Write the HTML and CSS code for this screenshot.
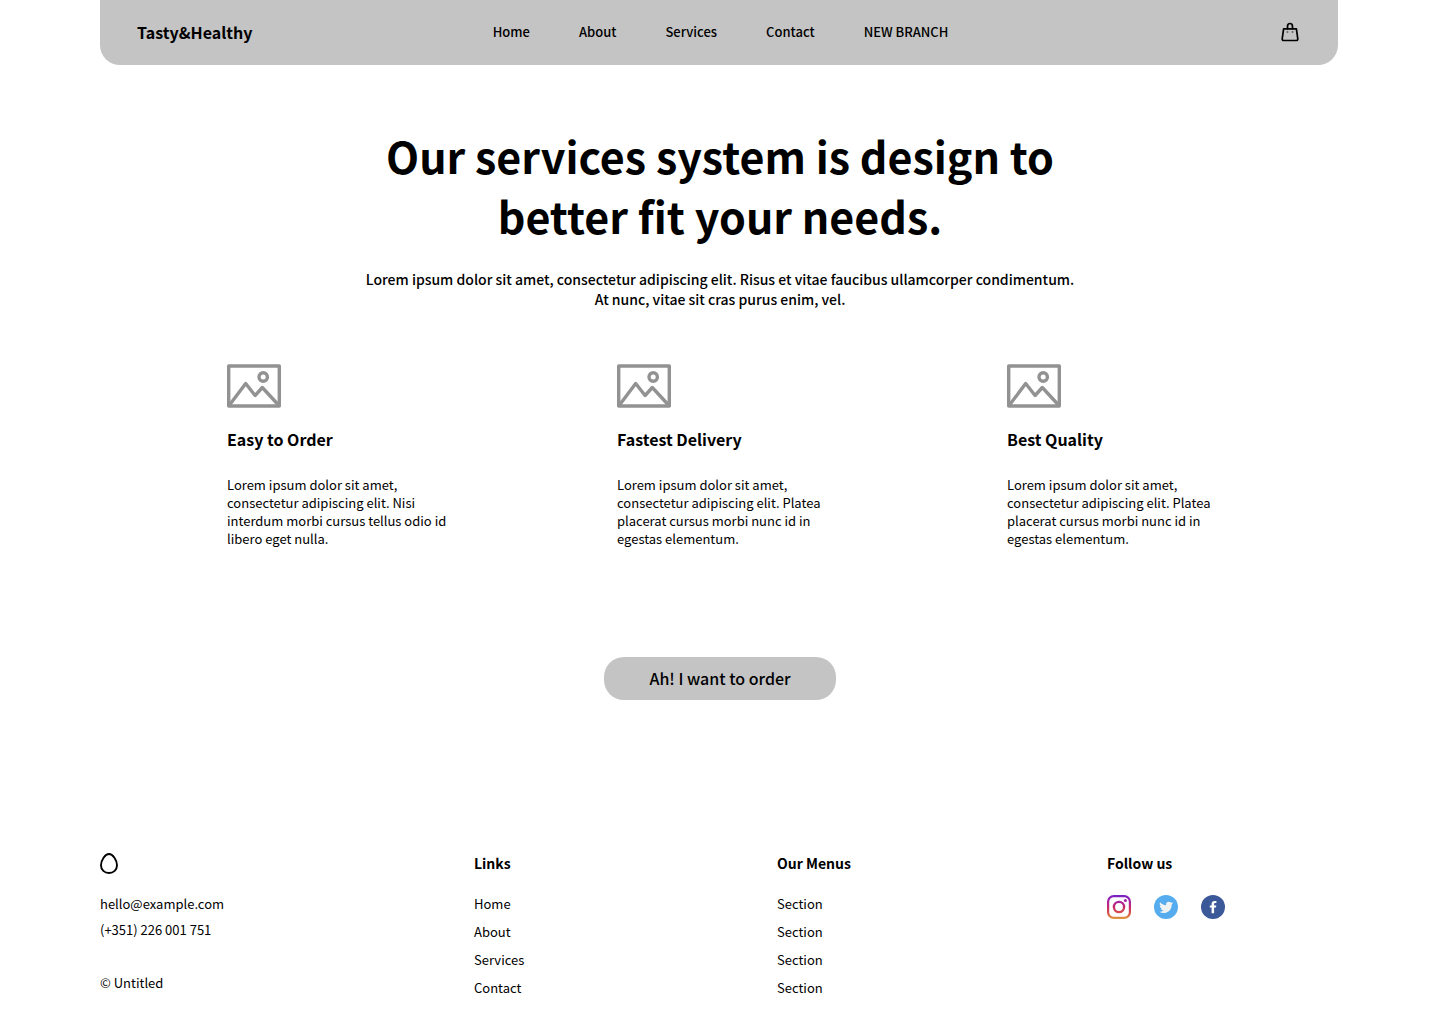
FILE: index.html
```html
<!DOCTYPE html>
<html lang="en">
<head>
<meta charset="utf-8">
<meta name="viewport" content="width=device-width, initial-scale=1">
<title>Tasty&amp;Healthy – Services</title>
<link rel="stylesheet" href="styles.css">
</head>
<body>
<svg class="sprite" aria-hidden="true">
  <symbol id="picture" viewBox="0 0 54 44">
    <g fill="none" stroke="#929292" stroke-width="3.4" stroke-linejoin="round" stroke-linecap="round">
      <rect x="1.7" y="2" width="50.6" height="40"/>
      <path d="M2.5 41 18.7 19.5l9.4 12 7.2-8L51.5 41"/>
      <circle cx="36.2" cy="13" r="4.2"/>
    </g>
  </symbol>
</svg>

<header class="header">
  <a class="brand" href="#">Tasty&amp;Healthy</a>
  <nav class="nav" aria-label="Main">
    <a href="#">Home</a>
    <a href="#">About</a>
    <a href="#">Services</a>
    <a href="#">Contact</a>
    <a href="#">NEW BRANCH</a>
  </nav>
  <button class="cart" type="button" aria-label="Shopping bag">
    <svg width="18" height="20" viewBox="0 0 18 20" fill="none" stroke="#000" stroke-width="1.7" stroke-linejoin="round" stroke-linecap="round">
      <path d="M2.6 6.9h12.8l1.4 9.9q.1 1.7-1.6 1.7H2.8q-1.7 0-1.6-1.7z"/>
      <path d="M6.5 6.700V4.400a2.500 2.900 0 0 1 5 0v2.300"/>
      <path d="M6.400 10h.1M11.500 10h.1" stroke="#666" stroke-width="1.900"/>
    </svg>
  </button>
</header>

<main>
  <section class="intro">
    <h1>Our services system is design to better fit your needs.</h1>
    <p>Lorem ipsum dolor sit amet, consectetur adipiscing elit. Risus et vitae faucibus ullamcorper condimentum. At nunc, vitae sit cras purus enim, vel.</p>
  </section>

  <section class="features">
    <article class="feature">
      <svg width="54" height="44" aria-hidden="true"><use href="#picture"/></svg>
      <h2>Easy to Order</h2>
      <p>Lorem ipsum dolor sit amet, consectetur adipiscing elit. Nisi interdum morbi cursus tellus odio id libero eget nulla.</p>
    </article>
    <article class="feature">
      <svg width="54" height="44" aria-hidden="true"><use href="#picture"/></svg>
      <h2>Fastest Delivery</h2>
      <p>Lorem ipsum dolor sit amet, consectetur adipiscing elit. Platea placerat cursus morbi nunc id in egestas elementum.</p>
    </article>
    <article class="feature">
      <svg width="54" height="44" aria-hidden="true"><use href="#picture"/></svg>
      <h2>Best Quality</h2>
      <p>Lorem ipsum dolor sit amet, consectetur adipiscing elit. Platea placerat cursus morbi nunc id in egestas elementum.</p>
    </article>
  </section>

  <div class="action">
    <button class="order" type="button">Ah! I want to order</button>
  </div>
</main>

<footer class="footer">
  <div class="contact">
    <svg width="18" height="24" viewBox="0 -2 18 24" fill="none" stroke="#000" stroke-width="1.9" aria-hidden="true">
      <path d="M9 1C12.800 1 17 7.400 17 12.200 17 16.900 13.500 20 9 20S1 16.900 1 12.200C1 7.400 5.200 1 9 1z"/>
    </svg>
    <a href="mailto:hello@example.com">hello@example.com</a>
    <a href="tel:+351226001751">(+351) 226 001 751</a>
    <small>© Untitled</small>
  </div>
  <nav class="links" aria-labelledby="links-title">
    <h3 id="links-title">Links</h3>
    <a href="#">Home</a>
    <a href="#">About</a>
    <a href="#">Services</a>
    <a href="#">Contact</a>
  </nav>
  <nav class="links" aria-labelledby="menus-title">
    <h3 id="menus-title">Our Menus</h3>
    <a href="#">Section</a>
    <a href="#">Section</a>
    <a href="#">Section</a>
    <a href="#">Section</a>
  </nav>
  <div class="follow">
    <h3>Follow us</h3>
    <div class="social">
      <a href="#" aria-label="Instagram">
        <svg width="24" height="24" viewBox="0 0 24 24" fill="none">
          <defs>
            <linearGradient id="insta" x1="12" y1="0" x2="12" y2="24" gradientUnits="userSpaceOnUse">
              <stop stop-color="#7024c4"/><stop offset=".2" stop-color="#a01fb0"/><stop offset=".5" stop-color="#c62a6c"/><stop offset=".75" stop-color="#d6504c"/><stop offset="1" stop-color="#e09b3d"/>
            </linearGradient>
          </defs>
          <rect x="1.1" y="1.1" width="21.8" height="21.8" rx="5.700" stroke="url(#insta)" stroke-width="2.2"/>
          <circle cx="12" cy="12" r="5.100" stroke="url(#insta)" stroke-width="2.400"/>
          <circle cx="18.400" cy="5.600" r="1.500" fill="url(#insta)"/>
        </svg>
      </a>
      <a href="#" aria-label="Twitter">
        <svg width="24" height="24" viewBox="0 0 24 24">
          <circle cx="12" cy="12" r="12" fill="#55acee"/>
          <path transform="translate(5.200 5.400) scale(.58)" fill="#f1f2f2" d="M23.950 4.570a10 10 0 0 1-2.820.770 4.960 4.960 0 0 0 2.160-2.720c-.950.550-2 .950-3.130 1.180a4.920 4.920 0 0 0-8.380 4.480C7.690 8.100 4.070 6.130 1.640 3.160a4.920 4.920 0 0 0 1.520 6.570 4.900 4.900 0 0 1-2.230-.610v.060a4.920 4.920 0 0 0 3.950 4.830 5 5 0 0 1-2.210.080 4.940 4.940 0 0 0 4.600 3.420A9.870 9.870 0 0 1 0 19.540a13.990 13.990 0 0 0 7.550 2.210c9.050 0 14-7.500 14-13.980 0-.210 0-.420-.020-.630a9.940 9.940 0 0 0 2.420-2.570z"/>
        </svg>
      </a>
      <a href="#" aria-label="Facebook">
        <svg width="24" height="24" viewBox="0 0 24 24">
          <circle cx="12" cy="12" r="12" fill="#3b5998"/>
          <path fill="#fff" d="M13.100 18.200v-5.600h1.900l.3-2.200h-2.200V9.200c0-.7.3-1.100 1.100-1.100h1.200V6.100c-.3 0-.9-.1-1.600-.1-2.100 0-3.200 1-3.200 2.900v1.500H8.800v2.200h1.800v5.600z"/>
        </svg>
      </a>
    </div>
  </div>
</footer>
</body>
</html>
```
FILE: styles.css
```css
* {
  box-sizing: border-box;
}

body {
  margin: 0;
  background: #fff;
  color: #000;
  font: 400 13px/18px "Noto Sans CJK SC", "Noto Sans", sans-serif;
}

h1, h2, h3, p {
  margin: 0;
}

a {
  color: inherit;
  text-decoration: none;
}

button {
  border: 0;
  padding: 0;
  color: inherit;
  font: inherit;
  cursor: pointer;
}

svg {
  display: block;
}

.sprite {
  position: absolute;
  width: 0;
  height: 0;
}

.header {
  display: grid;
  grid-template-columns: 1fr auto 1fr;
  align-items: center;
  margin: 0 102px 0 100px;
  padding: 18px 34px 20px 37px;
  min-height: 65px;
  border-radius: 0 0 20px 20px;
  background: #c4c4c4;
}

.brand {
  font-size: 16px;
  font-weight: 700;
}

.nav {
  display: flex;
  gap: 49px;
  font-weight: 500;
}

.cart {
  justify-self: end;
  display: grid;
  place-items: center;
  width: 28px;
  height: 24px;
  background: none;
}

.intro {
  max-width: 720px;
  margin: 60px auto 0;
  text-align: center;
}

.intro h1 {
  font-size: 43px;
  line-height: 60px;
  font-weight: 700;
}

.intro p {
  margin-top: 24px;
  font-size: 14px;
  line-height: 20px;
  font-weight: 500;
}

.features {
  display: grid;
  grid-template-columns: repeat(3, 226px);
  justify-content: space-between;
  padding: 55px 207px 0 227px;
}

.feature h2 {
  margin: 19px 0 25px;
  font-size: 16px;
  line-height: 24px;
  font-weight: 700;
}

.action {
  display: flex;
  justify-content: center;
  margin-top: 109px;
}

.order {
  min-width: 232px;
  padding: 10px 24px;
  border-radius: 20px;
  background: #c4c4c4;
  font-size: 16px;
  line-height: 23px;
  font-weight: 500;
}

.footer {
  display: grid;
  grid-template-columns: 374fr 303fr 330fr 231fr;
  margin-top: 151px;
  padding: 0 102px 24px 100px;
}

.footer h3 {
  font-size: 14px;
  line-height: 24px;
  font-weight: 700;
}

.contact,
.links {
  display: flex;
  flex-direction: column;
  align-items: flex-start;
}

.contact {
  gap: 8px;
}

.contact svg {
  margin-bottom: 12px;
}

.contact small {
  margin-top: 27px;
  font-size: 13px;
}

.links {
  gap: 10px;
}

.links h3 {
  margin-bottom: 10px;
}

.social {
  display: flex;
  gap: 23px;
  margin-top: 20px;
}
```
